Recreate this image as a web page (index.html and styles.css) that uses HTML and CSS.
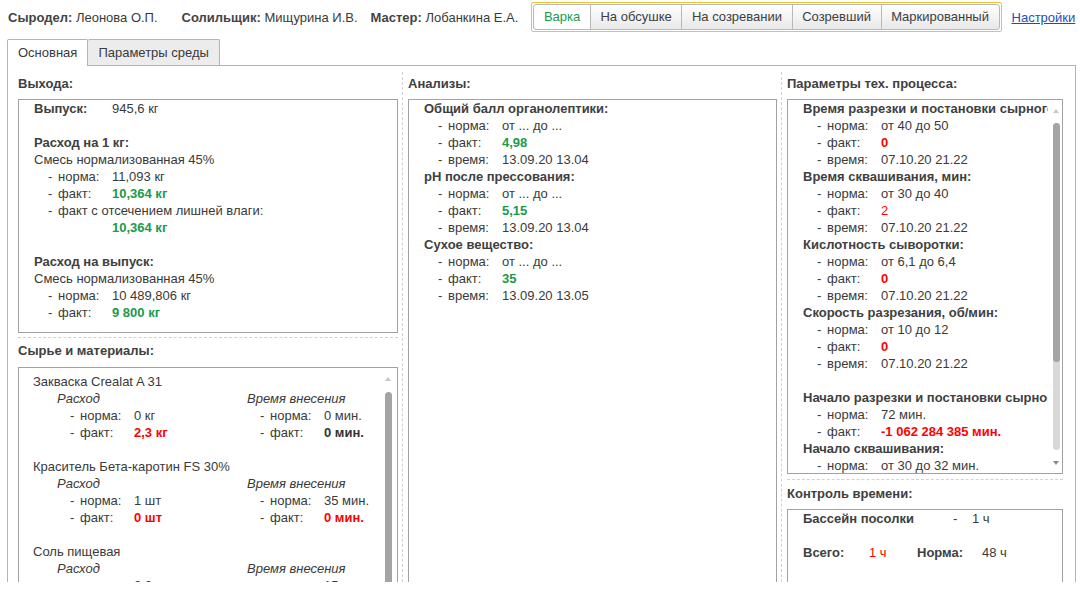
FILE: index.html
```html
<!DOCTYPE html>
<html lang="ru">
<head>
<meta charset="utf-8">
<title>Варка</title>
<link rel="stylesheet" href="styles.css">
</head>
<body>
<div class="page">
  <header class="topbar">
    <span class="person p1"><b>Сыродел:</b> Леонова О.П.</span>
    <span class="person p2"><b>Солильщик:</b> Мищурина И.В.</span>
    <span class="person p3"><b>Мастер:</b> Лобанкина Е.А.</span>
    <div class="states">
      <span class="state active">Варка</span>
      <span class="state">На обсушке</span>
      <span class="state">На созревании</span>
      <span class="state">Созревший</span>
      <span class="state">Маркированный</span>
    </div>
    <a class="settings" href="#">Настройки</a>
  </header>

  <nav class="tabs">
    <div class="tab active">Основная</div>
    <div class="tab">Параметры среды</div>
  </nav>

  <main class="frame">
    <section class="col col-left">
      <h2 class="head">Выхода:</h2>
      <div class="box box-out">
        <div class="kv top"><b class="k0">Выпуск:</b><span>945,6 кг</span></div>
        <div class="blank"></div>
        <div class="title">Расход на 1 кг:</div>
        <div class="line">Смесь нормализованная 45%</div>
        <div class="kv"><span class="d">-</span><span class="k">норма:</span><span class="v">11,093 кг</span></div>
        <div class="kv"><span class="d">-</span><span class="k">факт:</span><span class="v green">10,364 кг</span></div>
        <div class="kv"><span class="d">-</span><span>факт с отсечением лишней влаги:</span></div>
        <div class="kv solo"><span class="v green">10,364 кг</span></div>
        <div class="blank"></div>
        <div class="title">Расход на выпуск:</div>
        <div class="line">Смесь нормализованная 45%</div>
        <div class="kv"><span class="d">-</span><span class="k">норма:</span><span class="v">10 489,806 кг</span></div>
        <div class="kv"><span class="d">-</span><span class="k">факт:</span><span class="v green">9 800 кг</span></div>
      </div>

      <h2 class="head sep sep-left">Сырье и материалы:</h2>
      <div class="box box-mat">
        <div class="item">
          <div class="line">Закваска Crealat A 31</div>
          <div class="subcols">
            <div class="subcol">
              <div class="sub-head">Расход</div>
              <div class="kv"><span class="d">-</span><span class="k">норма:</span><span class="v">0 кг</span></div>
              <div class="kv"><span class="d">-</span><span class="k">факт:</span><span class="v red">2,3 кг</span></div>
            </div>
            <div class="subcol">
              <div class="sub-head">Время внесения</div>
              <div class="kv"><span class="d">-</span><span class="k">норма:</span><span class="v">0 мин.</span></div>
              <div class="kv"><span class="d">-</span><span class="k">факт:</span><span class="v strong">0 мин.</span></div>
            </div>
          </div>
        </div>
        <div class="item">
          <div class="line">Краситель Бета-каротин FS 30%</div>
          <div class="subcols">
            <div class="subcol">
              <div class="sub-head">Расход</div>
              <div class="kv"><span class="d">-</span><span class="k">норма:</span><span class="v">1 шт</span></div>
              <div class="kv"><span class="d">-</span><span class="k">факт:</span><span class="v red">0 шт</span></div>
            </div>
            <div class="subcol">
              <div class="sub-head">Время внесения</div>
              <div class="kv"><span class="d">-</span><span class="k">норма:</span><span class="v">35 мин.</span></div>
              <div class="kv"><span class="d">-</span><span class="k">факт:</span><span class="v red">0 мин.</span></div>
            </div>
          </div>
        </div>
        <div class="item">
          <div class="line">Соль пищевая</div>
          <div class="subcols">
            <div class="subcol">
              <div class="sub-head">Расход</div>
              <div class="kv"><span class="d">-</span><span class="k">норма:</span><span class="v">0,2 кг</span></div>
            </div>
            <div class="subcol">
              <div class="sub-head">Время внесения</div>
              <div class="kv"><span class="d">-</span><span class="k">норма:</span><span class="v">15 мин.</span></div>
            </div>
          </div>
        </div>
        <span class="sb-up sb-up-mat"></span>
        <span class="sb-thumb sb-thumb-mat"></span>
      </div>
    </section>

    <section class="col col-mid">
      <h2 class="head">Анализы:</h2>
      <div class="box box-an">
        <div class="title">Общий балл органолептики:</div>
        <div class="kv"><span class="d">-</span><span class="k">норма:</span><span class="v">от ... до ...</span></div>
        <div class="kv"><span class="d">-</span><span class="k">факт:</span><span class="v green">4,98</span></div>
        <div class="kv"><span class="d">-</span><span class="k">время:</span><span class="v">13.09.20 13.04</span></div>
        <div class="title">pH после прессования:</div>
        <div class="kv"><span class="d">-</span><span class="k">норма:</span><span class="v">от ... до ...</span></div>
        <div class="kv"><span class="d">-</span><span class="k">факт:</span><span class="v green">5,15</span></div>
        <div class="kv"><span class="d">-</span><span class="k">время:</span><span class="v">13.09.20 13.04</span></div>
        <div class="title">Сухое вещество:</div>
        <div class="kv"><span class="d">-</span><span class="k">норма:</span><span class="v">от ... до ...</span></div>
        <div class="kv"><span class="d">-</span><span class="k">факт:</span><span class="v green">35</span></div>
        <div class="kv"><span class="d">-</span><span class="k">время:</span><span class="v">13.09.20 13.05</span></div>
      </div>
    </section>

    <section class="col col-right">
      <h2 class="head">Параметры тех. процесса:</h2>
      <div class="box box-par">
        <div class="clip">
          <div class="title">Время разрезки и постановки сырного зерна, мин:</div>
          <div class="kv"><span class="d">-</span><span class="k">норма:</span><span class="v">от 40 до 50</span></div>
          <div class="kv"><span class="d">-</span><span class="k">факт:</span><span class="v red">0</span></div>
          <div class="kv"><span class="d">-</span><span class="k">время:</span><span class="v">07.10.20 21.22</span></div>
          <div class="title">Время сквашивания, мин:</div>
          <div class="kv"><span class="d">-</span><span class="k">норма:</span><span class="v">от 30 до 40</span></div>
          <div class="kv"><span class="d">-</span><span class="k">факт:</span><span class="v red-thin">2</span></div>
          <div class="kv"><span class="d">-</span><span class="k">время:</span><span class="v">07.10.20 21.22</span></div>
          <div class="title">Кислотность сыворотки:</div>
          <div class="kv"><span class="d">-</span><span class="k">норма:</span><span class="v">от 6,1 до 6,4</span></div>
          <div class="kv"><span class="d">-</span><span class="k">факт:</span><span class="v red">0</span></div>
          <div class="kv"><span class="d">-</span><span class="k">время:</span><span class="v">07.10.20 21.22</span></div>
          <div class="title">Скорость разрезания, об/мин:</div>
          <div class="kv"><span class="d">-</span><span class="k">норма:</span><span class="v">от 10 до 12</span></div>
          <div class="kv"><span class="d">-</span><span class="k">факт:</span><span class="v red">0</span></div>
          <div class="kv"><span class="d">-</span><span class="k">время:</span><span class="v">07.10.20 21.22</span></div>
          <div class="blank"></div>
          <div class="title">Начало разрезки и постановки сырного зерна:</div>
          <div class="kv"><span class="d">-</span><span class="k">норма:</span><span class="v">72 мин.</span></div>
          <div class="kv"><span class="d">-</span><span class="k">факт:</span><span class="v red">-1 062 284 385 мин.</span></div>
          <div class="title">Начало сквашивания:</div>
          <div class="kv"><span class="d">-</span><span class="k">норма:</span><span class="v">от 30 до 32 мин.</span></div>
        </div>
        <span class="sb-up sb-up-par"></span>
        <span class="sb-track sb-track-par"></span>
        <span class="sb-thumb sb-thumb-par"></span>
        <span class="sb-down sb-down-par"></span>
      </div>

      <h2 class="head sep sep-right">Контроль времени:</h2>
      <div class="box box-time">
        <div class="trow"><b class="t1">Бассейн посолки</b><span class="t2">-</span><span>1 ч</span></div>
        <div class="blank"></div>
        <div class="trow"><b class="t3">Всего:</b><span class="t4 red-thin">1 ч</span><b class="t5">Норма:</b><span>48 ч</span></div>
      </div>
    </section>
  </main>
</div>
</body>
</html>
```

FILE: styles.css
```css
* { box-sizing: border-box; }

html, body {
  margin: 0;
  padding: 0;
  background: #ffffff;
}

body {
  font-family: "Liberation Sans", Arial, sans-serif;
  font-size: 13px;
  line-height: 17px;
  color: #3a3a3a;
}

.page {
  width: 1080px;
  height: 582px;
  overflow: hidden;
  display: flex;
  flex-direction: column;
}

/* ---------- top bar ---------- */
.topbar {
  height: 34px;
  display: flex;
  align-items: center;
  padding-left: 8px;
  white-space: nowrap;
  flex: none;
}

.person b { font-weight: bold; color: #444; }
.p1 { margin-right: 24px; }
.p2 { margin-right: 13px; }
.p3 { margin-right: 13px; }

.states {
  display: flex;
  border: 1px solid #f3c232;
  border-radius: 2px;
  padding: 1px;
}

.state {
  height: 26px;
  line-height: 24px;
  padding: 0 9.6px;
  border: 1px solid #b9b9b9;
  margin-left: -1px;
  background: linear-gradient(#ffffff, #e8e8e8);
  color: #404040;
}
.state:first-child { margin-left: 0; border-radius: 3px 0 0 3px; }
.state:last-child { border-radius: 0 3px 3px 0; }
.state.active { background: #ffffff; color: #1b9a4a; }

.settings {
  margin-left: 10px;
  color: #1b4fb8;
  text-decoration: underline;
}

/* ---------- tabs ---------- */
.tabs {
  display: flex;
  align-items: flex-end;
  margin-top: 5px;
  padding-left: 7px;
  height: 26px;
  flex: none;
}

.tab {
  height: 26px;
  line-height: 25px;
  padding: 0 10px;
  border: 1px solid #b4b4b4;
  border-bottom: none;
  background: #ececec;
  color: #3a3a3a;
  border-radius: 2px 2px 0 0;
}
.tab + .tab { border-left: none; }
.tab.active {
  height: 27px;
  margin-bottom: -1px;
  background: #ffffff;
  position: relative;
  z-index: 1;
}

/* ---------- frame ---------- */
.frame {
  flex: 1;
  margin-left: 7px;
  width: 1069px;
  border: 1px solid #b4b4b4;
  border-bottom: none;
  display: flex;
  padding: 6px 12px 0 10px;
  min-height: 0;
}

.col {
  display: flex;
  flex-direction: column;
  flex: none;
  box-sizing: content-box;
}
.col-left {
  width: 380px;
  padding-right: 4px;
  border-right: 1px dashed #d2d2d2;
  margin-right: 5px;
}
.col-mid {
  width: 369px;
  padding-right: 4px;
  border-right: 1px dashed #d2d2d2;
  margin-right: 5px;
}
.col-right { width: 276px; }

.head {
  margin: 0 0 7px 0;
  padding-top: 3px;
  font-size: 13px;
  line-height: 17px;
  font-weight: bold;
  color: #404040;
  white-space: nowrap;
}
.head.sep { border-top: 1px dashed #d2d2d2; }
.sep-left { margin-top: 4px; padding-top: 4px; margin-bottom: 8px; }
.sep-right { margin-top: 5px; padding-top: 5px; margin-bottom: 7px; }

.box {
  position: relative;
  border: 1px solid #a2a2a2;
  padding-left: 15px;
  white-space: nowrap;
  overflow: hidden;
  flex: none;
}

.box-out { height: 234px; }
.box-mat { height: 320px; padding-left: 14px; padding-top: 5px; }
.box-an { height: 600px; }
.box-par { height: 375px; padding-right: 14px; }
.box-time { height: 200px; }

.clip { overflow: hidden; height: 100%; }

.title { font-weight: bold; color: #404040; }
.blank { height: 17px; }

.kv { display: flex; }
.kv .d { margin-left: 14px; width: 10px; flex: none; }
.kv .k { width: 54px; flex: none; }
.kv.top .k0 { width: 78px; color: #404040; }
.kv.solo { padding-left: 78px; }

.green { color: #1b9a4a; font-weight: bold; }
.red { color: #ff0000; font-weight: bold; }
.red-thin { color: #ff0000; }
.strong { font-weight: bold; color: #333; }

/* materials */
.item { margin-bottom: 17px; }
.subcols { display: flex; }
.subcol { width: 190px; flex: none; }
.subcol:first-child { margin-left: 24px; }
.sub-head { font-style: italic; }
.subcol .kv .d { margin-left: 13px; }

/* time control */
.trow { display: flex; }
.t1 { width: 150px; color: #404040; }
.t2 { width: 19px; }
.t3 { width: 66px; color: #404040; }
.t4 { width: 48px; }
.t5 { width: 65px; color: #404040; }

/* fake scrollbars */
.sb-up, .sb-down {
  position: absolute;
  width: 0;
  height: 0;
  border-left: 3.5px solid transparent;
  border-right: 3.5px solid transparent;
}
.sb-up { border-bottom: 4px solid #c6c6c6; }
.sb-down { border-top: 4px solid #8a8a8a; }

.sb-thumb, .sb-track {
  position: absolute;
  width: 7px;
  border-radius: 4px;
}
.sb-thumb { background: #a4a4a4; }
.sb-track { background: #d8d8d8; }

.sb-up-mat { left: 366px; top: 9px; }
.sb-thumb-mat { left: 366px; top: 24px; height: 400px; }

.sb-up-par { left: 265px; top: 9px; }
.sb-track-par { left: 265px; top: 23px; height: 327px; }
.sb-thumb-par { left: 265px; top: 23px; height: 239px; }
.sb-down-par { left: 265px; top: 361px; }
```
